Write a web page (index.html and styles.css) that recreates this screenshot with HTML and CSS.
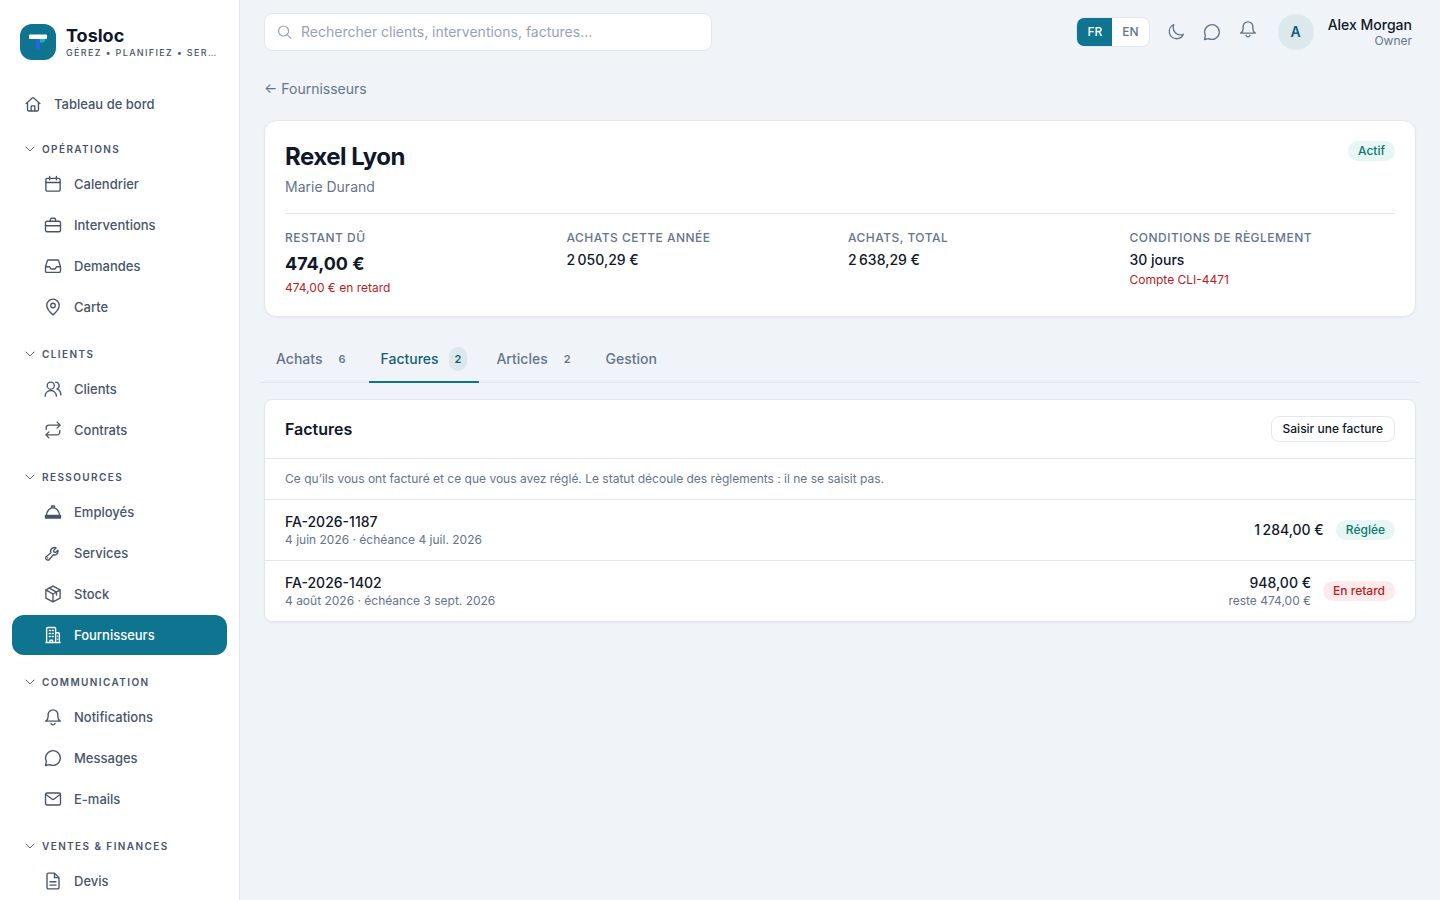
FILE: index.html
```html
<!DOCTYPE html>
<html lang="fr">
<head>
<meta charset="utf-8">
<meta name="viewport" content="width=device-width, initial-scale=1">
<title>Rexel Lyon – Tosloc</title>
<link rel="stylesheet" href="styles.css">
</head>
<body>
<svg class="sprite" aria-hidden="true">
  <symbol id="chevron" viewBox="0 0 24 24"><path d="m4 8 8 8 8-8"/></symbol>
  <symbol id="home" viewBox="0 0 24 24"><path d="m2.700 11.500 8.300-7.600a1.500 1.500 0 0 1 2 0l8.300 7.600M4.700 9.800v10a1.500 1.500 0 0 0 1.500 1.500h11.600a1.500 1.500 0 0 0 1.500-1.500v-10M9.500 21v-5.500a1 1 0 0 1 1-1h3a1 1 0 0 1 1 1V21"/></symbol>
  <symbol id="calendar" viewBox="0 0 24 24"><rect x="2.500" y="4.500" width="19" height="17" rx="2"/><path d="M2.500 10h19M7.500 1.800v4.500M16.500 1.800v4.500"/></symbol>
  <symbol id="briefcase" viewBox="0 0 24 24"><rect x="2" y="7" width="20" height="14" rx="2"/><path d="M8.500 7V5a2 2 0 0 1 2-2h3a2 2 0 0 1 2 2v2M2 13h20"/></symbol>
  <symbol id="inbox" viewBox="0 0 24 24"><path d="M5.800 4h12.400a1.500 1.500 0 0 1 1.400 1.100L22 13v6a1.500 1.500 0 0 1-1.500 1.500h-17A1.500 1.500 0 0 1 2 19v-6l2.400-7.900A1.500 1.500 0 0 1 5.800 4ZM2 13h5.500l1.700 3h5.600l1.700-3H22"/></symbol>
  <symbol id="pin" viewBox="0 0 24 24"><path d="M12 22.500s8.300-6.800 8.300-12.700a8.300 8.300 0 0 0-16.600 0C3.700 15.700 12 22.500 12 22.500Z"/><circle cx="12" cy="10" r="3"/></symbol>
  <symbol id="users" viewBox="0 0 24 24"><circle cx="9" cy="7.500" r="4.700"/><path d="M1.500 21.500a7.500 7.500 0 0 1 15 0M15.500 2.900a4.700 4.700 0 0 1 1.800 9c3.200 1.100 5.200 4 5.200 8"/></symbol>
  <symbol id="repeat" viewBox="0 0 24 24"><path d="m17.500 1.500 4 4-4 4M3 11V9a3.500 3.500 0 0 1 3.500-3.500h15M6.500 22.500l-4-4 4-4M21 13v2a3.500 3.500 0 0 1-3.500 3.500h-15"/></symbol>
  <symbol id="cloche" viewBox="0 0 24 24"><path d="M3.500 16a8.500 9.500 0 0 1 17 0M2 16.500h20v3.500H2ZM2.500 18.300h19M10 4h4v2.500h-4Z"/></symbol>
  <symbol id="wrench" viewBox="0 0 24 24"><path d="M18.800 9.800a5 5 0 0 1-6.600 4.600l-5 6.200a2.800 2.800 0 1 1-4-3.900l6.100-5a5 5 0 0 1 6.800-6.500l-3.300 3.300.5 2.200 2.200.5 3-3q.3.700.3 1.600Z"/><path d="M5 18.700h.1"/></symbol>
  <symbol id="box" viewBox="0 0 24 24"><path d="m12 1.500 9.500 5v11L12 22.500l-9.500-5v-11ZM2.500 6.500 12 12l9.500-5.500M12 12v10.500M7.200 4.100l9.500 5.300v4"/></symbol>
  <symbol id="building" viewBox="0 0 24 24"><path d="M3.500 22V3.500A1.500 1.500 0 0 1 5 2h9a1.500 1.500 0 0 1 1.500 1.500V22M15.500 9H19a1.500 1.500 0 0 1 1.500 1.500V22M2.500 22h19M8 22v-3h3.500v3"/><path d="M7 6h1.500m2.500 0h1.500M7 10h1.500m2.500 0h1.500M7 14h1.500m2.500 0h1.500M18 13.500h.2M18 17.500h.2"/></symbol>
  <symbol id="bell" viewBox="0 0 24 24"><path d="M5.500 9a6.500 6.500 0 0 1 13 0v2.500c0 2.500 1.400 4.800 3.200 6H2.300c1.800-1.200 3.200-3.500 3.200-6ZM9.300 20.500a2.800 2.800 0 0 0 5.400 0"/></symbol>
  <symbol id="chat" viewBox="0 0 24 24"><path d="M2 22l1.300-5.300A9.800 9.800 0 1 1 7.500 20.800Z"/></symbol>
  <symbol id="mail" viewBox="0 0 24 24"><rect x="2" y="4" width="20" height="16" rx="2"/><path d="m2.500 6 8.500 6.300a1.700 1.700 0 0 0 2 0L21.500 6"/></symbol>
  <symbol id="document" viewBox="0 0 24 24"><path d="M14 1.500H6A2 2 0 0 0 4 3.500v17a2 2 0 0 0 2 2h12a2 2 0 0 0 2-2v-13ZM14 1.500v6h6M8 13h8M8 17.500h8"/></symbol>
  <symbol id="search" viewBox="0 0 24 24"><circle cx="9.800" cy="10.500" r="7.500"/><path d="m15.300 16 5.700 5.500"/></symbol>
  <symbol id="moon" viewBox="0 0 24 24"><path d="M21.750 15A9.700 9.700 0 0 1 18 15.750 9.750 9.750 0 0 1 8.250 6c0-1.300.3-2.600.75-3.750A9.750 9.750 0 0 0 12.750 21a9.750 9.750 0 0 0 9-6Z"/></symbol>
</svg>

<div class="app">
  <aside class="sidebar">
    <div class="brand">
      <svg class="logo" viewBox="0 0 36 36" aria-hidden="true">
        <rect width="36" height="36" rx="12" fill="#0e7490"/>
        <path d="M20 15h5v1.500a2 2 0 0 1-2 2h-3Z" fill="#14b8a6"/>
        <path d="M16 15h4v9a1 1 0 0 1-1 1h-2a1 1 0 0 1-1-1Z" fill="#2563eb"/>
        <rect x="9" y="10.500" width="18" height="4.500" rx="1" fill="#fff"/>
      </svg>
      <div class="brand-text">
        <div class="brand-name">Tosloc</div>
        <div class="brand-tag">GÉREZ • PLANIFIEZ • SER…</div>
      </div>
    </div>
    <nav class="nav" aria-label="Navigation principale">
      <a class="nav-link nav-link-top" href="#"><svg class="icon"><use href="#home"/></svg>Tableau de bord</a>

      <section class="group">
        <button class="group-head" type="button" aria-expanded="true"><svg class="icon icon-chevron"><use href="#chevron"/></svg>Opérations</button>
        <a class="nav-link" href="#"><svg class="icon"><use href="#calendar"/></svg>Calendrier</a>
        <a class="nav-link" href="#"><svg class="icon"><use href="#briefcase"/></svg>Interventions</a>
        <a class="nav-link" href="#"><svg class="icon"><use href="#inbox"/></svg>Demandes</a>
        <a class="nav-link" href="#"><svg class="icon"><use href="#pin"/></svg>Carte</a>
      </section>

      <section class="group">
        <button class="group-head" type="button" aria-expanded="true"><svg class="icon icon-chevron"><use href="#chevron"/></svg>Clients</button>
        <a class="nav-link" href="#"><svg class="icon"><use href="#users"/></svg>Clients</a>
        <a class="nav-link" href="#"><svg class="icon"><use href="#repeat"/></svg>Contrats</a>
      </section>

      <section class="group">
        <button class="group-head" type="button" aria-expanded="true"><svg class="icon icon-chevron"><use href="#chevron"/></svg>Ressources</button>
        <a class="nav-link" href="#"><svg class="icon"><use href="#cloche"/></svg>Employés</a>
        <a class="nav-link" href="#"><svg class="icon"><use href="#wrench"/></svg>Services</a>
        <a class="nav-link" href="#"><svg class="icon"><use href="#box"/></svg>Stock</a>
        <a class="nav-link nav-link-active" href="#" aria-current="page"><svg class="icon"><use href="#building"/></svg>Fournisseurs</a>
      </section>

      <section class="group">
        <button class="group-head" type="button" aria-expanded="true"><svg class="icon icon-chevron"><use href="#chevron"/></svg>Communication</button>
        <a class="nav-link" href="#"><svg class="icon"><use href="#bell"/></svg>Notifications</a>
        <a class="nav-link" href="#"><svg class="icon"><use href="#chat"/></svg>Messages</a>
        <a class="nav-link" href="#"><svg class="icon"><use href="#mail"/></svg>E-mails</a>
      </section>

      <section class="group">
        <button class="group-head" type="button" aria-expanded="true"><svg class="icon icon-chevron"><use href="#chevron"/></svg>Ventes &amp; Finances</button>
        <a class="nav-link" href="#"><svg class="icon"><use href="#document"/></svg>Devis</a>
      </section>
    </nav>
  </aside>

  <div class="page">
    <header class="topbar">
      <label class="search">
        <svg class="icon icon-search"><use href="#search"/></svg>
        <input class="search-input" type="search" aria-label="Rechercher" placeholder="Rechercher clients, interventions, factures…">
      </label>
      <div class="tools">
        <div class="lang" role="group" aria-label="Langue">
          <button class="lang-btn lang-btn-on" type="button" aria-pressed="true">FR</button>
          <button class="lang-btn" type="button" aria-pressed="false">EN</button>
        </div>
        <div class="tool-icons">
          <button class="tool" type="button" aria-label="Thème sombre"><svg class="icon"><use href="#moon"/></svg></button>
          <button class="tool" type="button" aria-label="Messages"><svg class="icon"><use href="#chat"/></svg></button>
          <button class="tool tool-bell" type="button" aria-label="Notifications"><svg class="icon"><use href="#bell"/></svg></button>
        </div>
        <button class="user" type="button">
          <span class="avatar">A</span>
          <span class="user-text"><span class="user-name">Alex Morgan</span><span class="user-role">Owner</span></span>
        </button>
      </div>
    </header>

    <main class="content">
      <a class="back" href="#">← Fournisseurs</a>

      <section class="card summary">
        <div class="summary-head">
          <div>
            <h1 class="title">Rexel Lyon</h1>
            <p class="contact">Marie Durand</p>
          </div>
          <span class="badge badge-ok">Actif</span>
        </div>
        <dl class="stats">
          <div><dt class="stat-label">Restant dû</dt><dd class="stat-value stat-value-big">474,00&nbsp;€</dd><dd class="stat-note">474,00&nbsp;€ en retard</dd></div>
          <div><dt class="stat-label">Achats cette année</dt><dd class="stat-value">2&#8239;050,29&nbsp;€</dd></div>
          <div><dt class="stat-label">Achats, total</dt><dd class="stat-value">2&#8239;638,29&nbsp;€</dd></div>
          <div><dt class="stat-label">Conditions de règlement</dt><dd class="stat-value">30 jours</dd><dd class="stat-note">Compte CLI-4471</dd></div>
        </dl>
      </section>

      <div class="tabs" role="tablist">
        <button class="tab" type="button" role="tab" aria-selected="false">Achats<span class="count">6</span></button>
        <button class="tab tab-on" type="button" role="tab" aria-selected="true">Factures<span class="count">2</span></button>
        <button class="tab" type="button" role="tab" aria-selected="false">Articles<span class="count">2</span></button>
        <button class="tab" type="button" role="tab" aria-selected="false">Gestion</button>
      </div>

      <section class="card invoices">
        <div class="invoices-head">
          <h2 class="subtitle">Factures</h2>
          <button class="btn" type="button">Saisir une facture</button>
        </div>
        <p class="hint">Ce qu’ils vous ont facturé et ce que vous avez réglé. Le statut découle des règlements : il ne se saisit pas.</p>
        <ul class="rows">
          <li class="row">
            <div><div class="ref">FA-2026-1187</div><div class="meta">4 juin 2026 · échéance 4 juil. 2026</div></div>
            <div class="row-end"><div class="amount"><div class="ref">1&#8239;284,00&nbsp;€</div></div><span class="badge badge-ok">Réglée</span></div>
          </li>
          <li class="row">
            <div><div class="ref">FA-2026-1402</div><div class="meta">4 août 2026 · échéance 3 sept. 2026</div></div>
            <div class="row-end"><div class="amount"><div class="ref">948,00&nbsp;€</div><div class="meta">reste 474,00&nbsp;€</div></div><span class="badge badge-late">En retard</span></div>
          </li>
        </ul>
      </section>
    </main>
  </div>
</div>
</body>
</html>
```
FILE: styles.css
```css
:root {
  --brand: #0e7490;
  --brand-dark: #155e75;
  --ink: #0f172a;
  --slate: #475569;
  --muted: #64748b;
  --line: #e2e8f0;
  --bg: #f0f4f8;
  --danger: #b91c1c;
}

* { box-sizing: border-box; }

body {
  margin: 0;
  background: var(--bg);
  color: var(--ink);
  font: 14px/20px Inter, "Liberation Sans", sans-serif;
}

h1, h2, p, dl, dd, ul { margin: 0; padding: 0; }
ul { list-style: none; }
a { color: inherit; text-decoration: none; }

button {
  border: 0;
  padding: 0;
  background: none;
  color: inherit;
  font: inherit;
  cursor: pointer;
}

.sprite { display: none; }

.icon {
  flex: none;
  width: 18px;
  height: 18px;
  fill: none;
  stroke: currentColor;
  stroke-width: 1.8;
  stroke-linecap: round;
  stroke-linejoin: round;
}

.app {
  display: grid;
  grid-template-columns: 240px minmax(0, 1fr);
  height: 100vh;
}

/* Sidebar */
.sidebar {
  overflow: hidden;
  background: #fff;
  border-right: 1px solid var(--line);
}

.brand {
  display: flex;
  align-items: center;
  gap: 10px;
  padding: 24px 20px;
}

.logo { flex: none; width: 36px; height: 36px; }
.brand-text { min-width: 0; }
.brand-name { font-size: 18px; font-weight: 700; line-height: 22px; }

.brand-tag {
  color: var(--slate);
  font-size: 9px;
  font-weight: 500;
  line-height: 12px;
  letter-spacing: 0.15em;
  white-space: nowrap;
}

.nav { padding: 0 12px; }
.group { display: flex; flex-direction: column; gap: 1px; margin-top: 12px; }
.nav-link-top + .group { margin-top: 10px; }

.group-head {
  display: flex;
  align-items: center;
  gap: 6px;
  height: 29px;
  padding: 0 12px;
  color: var(--slate);
  font-size: 10px;
  font-weight: 600;
  letter-spacing: 0.14em;
  text-transform: uppercase;
}

.icon-chevron { width: 12px; height: 12px; }

.nav-link {
  display: flex;
  align-items: center;
  gap: 12px;
  padding: 10px 12px 10px 32px;
  border-radius: 12px;
  color: var(--slate);
  font-size: 13px;
  font-weight: 500;
}

.nav-link-top { padding-left: 12px; }
.nav-link-active { background: var(--brand); color: #fff; }

/* Top bar */
.page { min-width: 0; overflow: auto; }

.topbar {
  display: flex;
  align-items: center;
  justify-content: space-between;
  gap: 24px;
  height: 64px;
  padding: 0 28px 0 24px;
}

.search {
  display: flex;
  align-items: center;
  gap: 8px;
  flex: 0 1 448px;
  height: 38px;
  padding: 0 12px;
  background: #fff;
  border: 1px solid var(--line);
  border-radius: 8px;
}

.icon-search { width: 16px; height: 16px; color: #94a3b8; }

.search-input {
  flex: 1;
  min-width: 0;
  padding: 0;
  border: 0;
  outline: 0;
  background: none;
  color: var(--ink);
  font: inherit;
}

.search-input::placeholder { color: #94a3b8; }

.tools { display: flex; align-items: center; gap: 8px; }

.lang {
  display: flex;
  overflow: hidden;
  background: #fff;
  border: 1px solid var(--line);
  border-radius: 8px;
}

.lang-btn {
  padding: 6px 10px;
  color: var(--muted);
  font-size: 12px;
  font-weight: 500;
  line-height: 16px;
}

.lang-btn-on { background: var(--brand); color: #fff; }

.tool-icons { display: flex; }
.tool { display: flex; padding: 9px; color: var(--muted); }
.tool-bell { padding: 6px 9px 12px; }

.user { display: flex; align-items: center; gap: 14px; margin-left: 4px; }

.avatar {
  display: grid;
  place-items: center;
  width: 36px;
  height: 36px;
  border-radius: 50%;
  background: #dbe8ec;
  color: var(--brand-dark);
  font-weight: 600;
}

.user-text { display: flex; flex-direction: column; padding-top: 2px; text-align: right; }
.user-name { font-weight: 500; line-height: 16px; }
.user-role { color: var(--muted); font-size: 12px; line-height: 16px; }

/* Content */
.content { padding: 15px 24px 24px; }

.back { display: inline-block; color: var(--muted); }

.card {
  background: #fff;
  border: 1px solid var(--line);
  border-radius: 12px;
  box-shadow: 0 1px 2px rgb(15 23 42 / 5%);
}

.summary { margin-top: 21px; padding: 20px; }

.summary-head {
  display: flex;
  align-items: flex-start;
  justify-content: space-between;
  padding-bottom: 16px;
  border-bottom: 1px solid var(--line);
}

.title { font-size: 24px; font-weight: 700; line-height: 32px; letter-spacing: -0.02em; }
.contact { margin-top: 4px; color: var(--muted); }

.badge {
  padding: 2px 10px;
  border-radius: 10px;
  font-size: 12px;
  font-weight: 500;
  line-height: 16px;
}

.badge-ok { background: #e6f6f4; color: #0f766e; }
.badge-late { background: #fdeaea; color: var(--danger); }

.stats {
  display: grid;
  grid-template-columns: repeat(4, minmax(0, 1fr));
  gap: 16px;
  padding-top: 16px;
}

.stat-label {
  color: var(--muted);
  font-size: 12px;
  font-weight: 500;
  line-height: 16px;
  letter-spacing: 0.04em;
  text-transform: uppercase;
}

.stat-value { margin-top: 4px; font-weight: 500; }
.stat-value-big { font-size: 18px; font-weight: 700; line-height: 28px; }
.stat-note { margin-top: 2px; color: var(--danger); font-size: 12px; line-height: 16px; }

.tabs {
  display: flex;
  gap: 5px;
  margin: 18px -4px 0;
  padding: 0 4px;
  border-bottom: 1px solid var(--line);
}

.tab {
  display: flex;
  align-items: center;
  gap: 10px;
  margin-bottom: -1px;
  padding: 12px 12px 10px;
  border-bottom: 2px solid transparent;
  color: var(--muted);
  font-weight: 500;
  line-height: 24px;
}

.tab-on { border-color: var(--brand); color: var(--brand-dark); }

.count {
  padding: 0 6px;
  border-radius: 12px;
  font-size: 11px;
  font-weight: 600;
}

.tab-on .count { background: #dbe8ec; }

.invoices { margin-top: 16px; border-radius: 8px; }

.invoices-head {
  display: flex;
  align-items: center;
  justify-content: space-between;
  padding: 16px 20px;
  border-bottom: 1px solid var(--line);
}

.subtitle { font-size: 16px; font-weight: 600; line-height: 24px; }

.btn {
  padding: 4px 11px;
  border: 1px solid var(--line);
  border-radius: 8px;
  font-size: 12px;
  font-weight: 500;
  line-height: 16px;
}

.hint {
  padding: 12px 20px;
  color: var(--muted);
  font-size: 12px;
  line-height: 16px;
}

.row {
  display: flex;
  align-items: center;
  justify-content: space-between;
  padding: 12px 20px;
  border-top: 1px solid var(--line);
}

.row-end { display: flex; align-items: center; gap: 12px; }
.amount { text-align: right; }
.ref { font-weight: 500; }
.meta { color: var(--muted); font-size: 12px; line-height: 16px; }
```
